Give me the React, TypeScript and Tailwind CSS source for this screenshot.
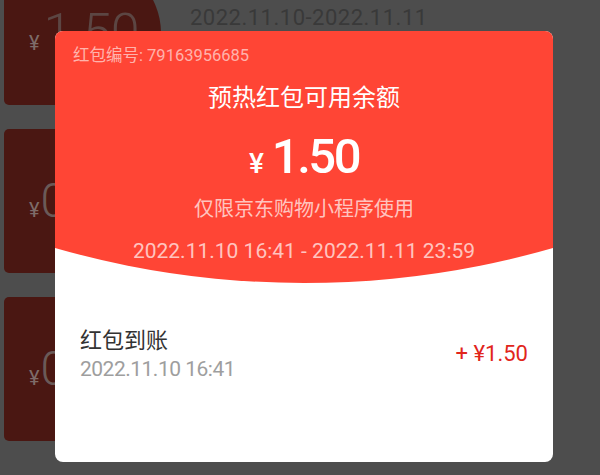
export default function App() {
  return (
    <div className="relative w-[600px] h-[475px] overflow-hidden bg-[#4d4d4d] font-['Roboto','Noto_Sans_CJK_SC',sans-serif]">
      {/* background list */}
      <div className="flex flex-col gap-[24px] -mt-[39px]">
        <div className="flex">
          <div className="ml-[4px] w-[157px] h-[144px] shrink-0 bg-[#4a1712] rounded-[5px] rounded-tr-[72px] flex items-center pl-[25px]">
            <div className="flex items-baseline leading-none">
              <span className="text-[20px] text-[#7e6c69]">¥</span>
              <span className="ml-[4px] text-[52px] font-light text-[#5c4643] tracking-[-1px]">1.50</span>
            </div>
          </div>
          <div className="pl-[29px] pt-[46px] text-[22px] leading-none tracking-[0.5px] text-[#393939]">
            2022.11.10-2022.11.11
          </div>
        </div>
        <div className="flex">
          <div className="ml-[4px] w-[157px] h-[144px] shrink-0 bg-[#4a1712] rounded-[5px] flex items-center pl-[25px]">
            <div className="flex items-baseline leading-none">
              <span className="text-[20px] text-[#7e6c69]">¥</span>
              <span className="ml-[1px] text-[48px] font-light text-[#6a5a58]">0</span>
            </div>
          </div>
        </div>
        <div className="flex">
          <div className="ml-[4px] w-[157px] h-[144px] shrink-0 bg-[#4a1712] rounded-[5px] flex items-center pl-[25px]">
            <div className="flex items-baseline leading-none">
              <span className="text-[20px] text-[#7e6c69]">¥</span>
              <span className="ml-[1px] text-[48px] font-light text-[#6a5a58]">0</span>
            </div>
          </div>
        </div>
      </div>

      {/* modal */}
      <div className="absolute left-[55px] top-[31px] w-[498px] h-[431px] rounded-[8px] overflow-hidden bg-white flex flex-col">
        <div className="h-[252px] shrink-0 bg-[#ff4535] [clip-path:circle(903px_at_50%_-651px)] flex flex-col">
          <div className="pt-[14px] pl-[18px] text-[16.5px] leading-[22px] text-white/60">
            红包编号: 79163956685
          </div>
          <div className="mt-[15px] text-center text-[24px] leading-[32px] text-white">
            预热红包可用余额
          </div>
          <div className="mt-[18px] flex items-baseline justify-center leading-none text-white">
            <span className="text-[28px] font-medium">¥</span>
            <span className="ml-[8px] text-[49px] font-medium tracking-[-2.5px]">1.50</span>
          </div>
          <div className="mt-[14px] text-center text-[20px] leading-[28px] text-white/70">
            仅限京东购物小程序使用
          </div>
          <div className="mt-[14px] text-center text-[21px] leading-[28px] text-white/70">
            2022.11.10 16:41 - 2022.11.11 23:59
          </div>
        </div>
        <div className="pt-[43px] px-[25px] flex items-center justify-between">
          <div className="flex flex-col">
            <div className="text-[22px] leading-[30px] text-[#333333]">红包到账</div>
            <div className="text-[21px] leading-[26px] tracking-[-0.5px] text-[#9e9e9e]">2022.11.10 16:41</div>
          </div>
          <div className="text-[22px] leading-[30px] text-[#e1251b]">+ ¥1.50</div>
        </div>
      </div>
    </div>
  );
}
